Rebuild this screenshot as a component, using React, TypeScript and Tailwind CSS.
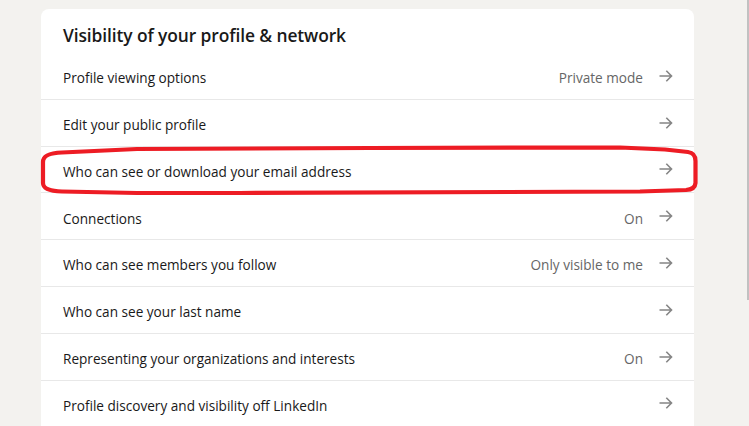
import React from 'react';

const rows: { label: string; value?: string }[] = [
  { label: 'Profile viewing options', value: 'Private mode' },
  { label: 'Edit your public profile' },
  { label: 'Who can see or download your email address' },
  { label: 'Connections', value: 'On' },
  { label: 'Who can see members you follow', value: 'Only visible to me' },
  { label: 'Who can see your last name' },
  { label: 'Representing your organizations and interests', value: 'On' },
  { label: 'Profile discovery and visibility off LinkedIn' },
];

function ArrowRight() {
  return (
    <svg width="16" height="16" viewBox="0 0 16 16" fill="none" className="shrink-0">
      <path d="M1.5 8h12M8.3 2.8L13.5 8l-5.2 5.2" stroke="#858585" strokeWidth="1.6" />
    </svg>
  );
}

export default function App() {
  return (
    <div
      className="relative h-[426px] w-[749px] overflow-hidden bg-[#f3f2ef] pt-[9px] pl-[41px]"
      style={{ fontFamily: '"Open Sans", "Noto Sans", Arial, sans-serif' }}
    >
      <section className="w-[653px] rounded-t-lg bg-white">
        <h2 className="px-[22px] pt-[12px] pb-[4px] text-[17.4px] leading-[28px] font-semibold tracking-[-0.1px] text-[#191919]">
          Visibility of your profile &amp; network
        </h2>
        <ul>
          {rows.map((r) => (
            <li
              key={r.label}
              className="flex h-[46.8px] items-center justify-between border-b border-[#e8e8e8] pr-[20px] pl-[22px] text-[13.6px] text-[#191919]"
            >
              <span className="pt-[5px]">{r.label}</span>
              <span className="flex items-center gap-[15px] text-[#666666]">
                {r.value && <span className="pt-[5px]">{r.value}</span>}
                <ArrowRight />
              </span>
            </li>
          ))}
        </ul>
      </section>

      {/* red hand-drawn annotation */}
      <svg className="pointer-events-none absolute top-0 left-0" width="749" height="426">
        <path
          d="M62 152.5 L137 149 L370 148 L620 147.5 L665 149.5 L688 152 Q695.5 153 695.5 161 L695.5 183 Q695 189.5 686 190 L640 191.5 L240 193 L137 193 L62 191.5 Q43 191 43 183 L43 162 Q43 153 62 152.5 Z"
          stroke="#ed1c24"
          strokeWidth="4.2"
          fill="none"
          strokeLinejoin="round"
        />
      </svg>

      {/* scrollbar thumb */}
      <div className="absolute top-0 right-0 h-[300px] w-[2px] bg-[#c1c1c1]" />
    </div>
  );
}
